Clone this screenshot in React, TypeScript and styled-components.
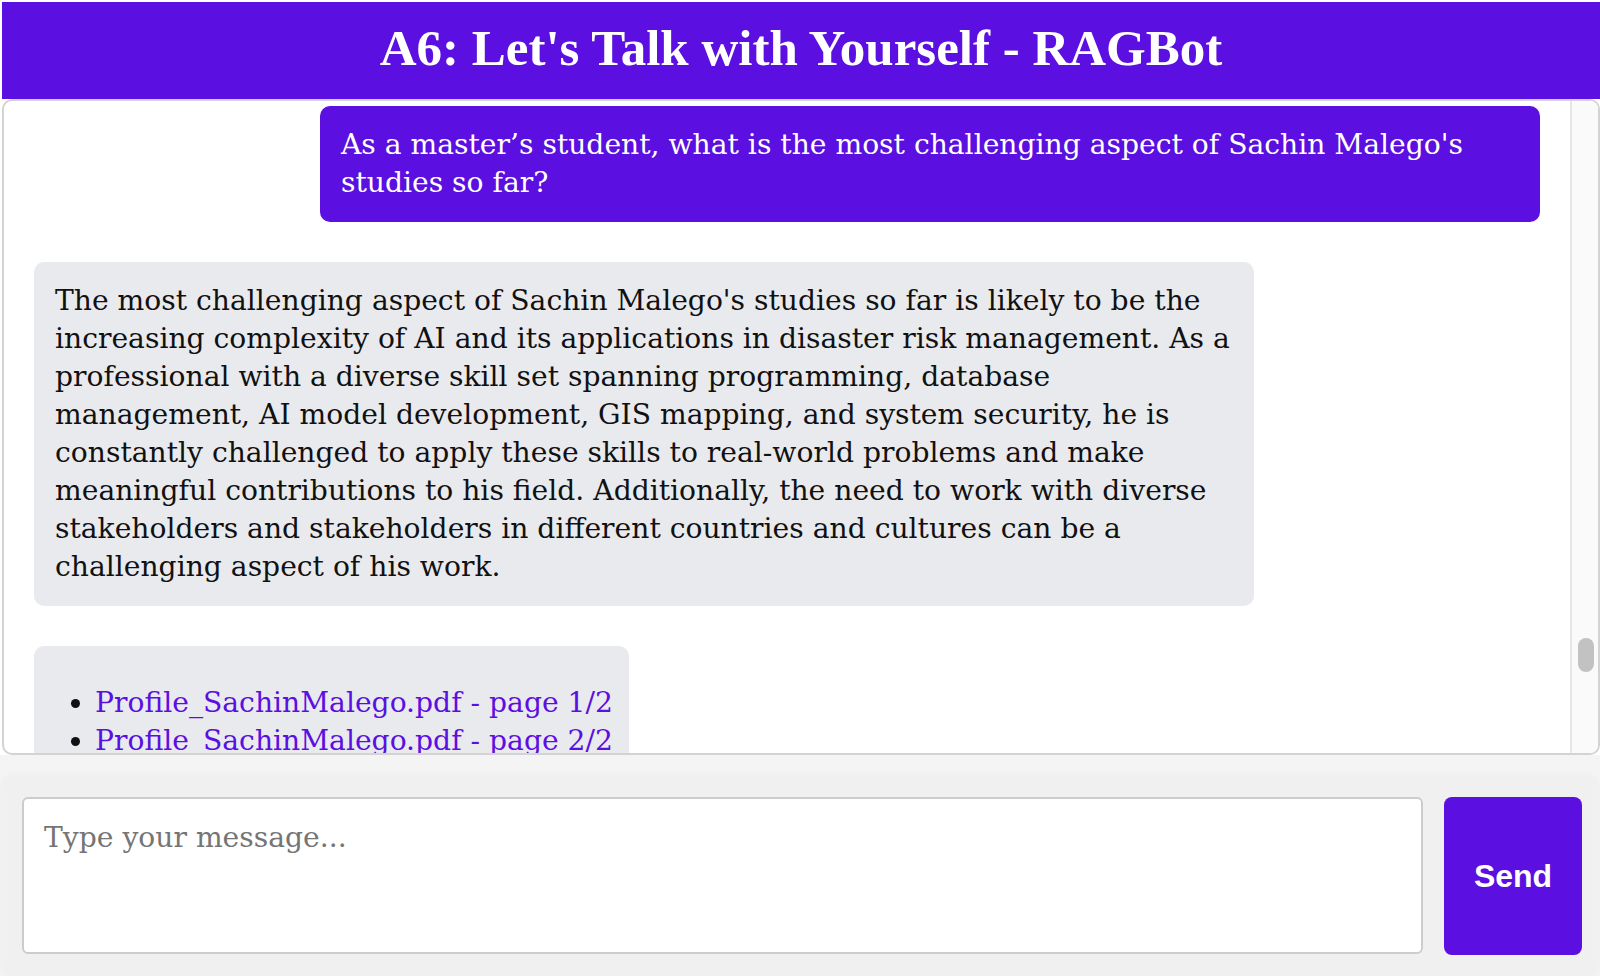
import React, { useLayoutEffect, useRef, useState } from "react";
import styled, { createGlobalStyle } from "styled-components";

const PURPLE = "#5b0fe0";
const BODY_FONT = `"DejaVu Serif", "Liberation Serif", serif`;

const GlobalStyle = createGlobalStyle`
  html, body {
    margin: 0;
    padding: 0;
    height: 100%;
    overflow: hidden;
    background: #ffffff;
  }
  #root { height: 100%; }
  *, *::before, *::after { box-sizing: border-box; }
`;

const Page = styled.div`
  height: 100vh;
  display: flex;
  flex-direction: column;
  padding: 2px 0 0 2px;
  font-family: ${BODY_FONT};
`;

const Header = styled.header`
  flex: 0 0 97px;
  background: ${PURPLE};
  display: flex;
  align-items: center;
  justify-content: center;
  padding-bottom: 5px;
  position: relative;
  z-index: 1;
`;

const Title = styled.h1`
  margin: 0;
  color: #ffffff;
  font-family: "Liberation Serif", serif;
  font-weight: 700;
  font-size: 51px;
  line-height: 1;
`;

const ChatBox = styled.main`
  flex: 1 1 auto;
  min-height: 0;
  display: flex;
  background: #ffffff;
  border: 2px solid #d3d3d3;
  border-radius: 10px;
  overflow: hidden;
`;

const ScrollArea = styled.div`
  flex: 1 1 auto;
  min-width: 0;
  position: relative;
  overflow-y: scroll;
  overflow-x: hidden;
  scrollbar-width: none;

  &::-webkit-scrollbar {
    display: none;
  }
`;

const ScrollTrack = styled.div`
  flex: 0 0 28px;
  position: relative;
  background: #fafafa;
  border-left: 2px solid #e6e6e6;
`;

const ScrollThumb = styled.div`
  position: absolute;
  left: 6px;
  width: 16px;
  border-radius: 8px;
  background: #c2c2c2;
`;

const Thread = styled.div`
  display: flex;
  flex-direction: column;
  gap: 40px;
  padding: 0 30px;
`;

const HistorySpacer = styled.div<{ $height: number }>`
  flex: 0 0 ${(p) => p.$height}px;
`;

const Bubble = styled.div<{ $from: "user" | "bot" }>`
  max-width: 1220px;
  align-self: ${(p) => (p.$from === "user" ? "flex-end" : "flex-start")};
  padding: 20px 16px 20px 21px;
  border-radius: 10px;
  background: ${(p) => (p.$from === "user" ? PURPLE : "#e9eaee")};
  color: ${(p) => (p.$from === "user" ? "#ffffff" : "#111111")};
  font-size: 28.2px;
  line-height: 38px;
`;

const SourceList = styled.ul`
  margin: 18px 0;
  padding-left: 40px;
`;

const SourceLink = styled.a`
  color: ${PURPLE};
  text-decoration: none;
`;

const Composer = styled.section`
  flex: 0 0 220px;
  display: flex;
  background: #f4f4f4;
  margin-left: -2px;
  padding: 21px 2px 0 2px;
`;

const ComposerPanel = styled.div`
  flex: 1;
  display: flex;
  gap: 21px;
  padding: 21px 16px 21px 20px;
  background: #f0f0f0;
  border-radius: 12px;
  box-shadow: 0 0 8px rgba(0, 0, 0, 0.04);
`;

const MessageInput = styled.textarea`
  flex: 1;
  height: 157px;
  margin: 0;
  padding: 20px;
  border: 2px solid #cccccc;
  border-radius: 6px;
  background: #ffffff;
  resize: none;
  outline: none;
  font-family: ${BODY_FONT};
  font-size: 28.2px;
  line-height: 38px;
  color: #111111;

  &::placeholder {
    color: #757575;
  }
`;

const SendButton = styled.button`
  flex: 0 0 138px;
  height: 158px;
  border: none;
  border-radius: 8px;
  background: ${PURPLE};
  color: #ffffff;
  font-family: "Liberation Sans", Arial, sans-serif;
  font-weight: 700;
  font-size: 32px;
  cursor: pointer;
`;

export default function App() {
  const areaRef = useRef<HTMLDivElement>(null);
  const anchorRef = useRef<HTMLDivElement>(null);
  const [thumb, setThumb] = useState({ top: 0, height: 0 });

  const updateThumb = () => {
    const area = areaRef.current;
    if (!area) return;
    const track = area.clientHeight;
    const total = area.scrollHeight;
    const height = Math.max(20, (area.clientHeight / total) * track);
    const maxScroll = total - area.clientHeight;
    const top = maxScroll > 0 ? (area.scrollTop / maxScroll) * (track - height) : 0;
    setThumb({ top, height });
  };

  useLayoutEffect(() => {
    const area = areaRef.current;
    const anchor = anchorRef.current;
    if (area && anchor) {
      area.scrollTop = anchor.offsetTop - 5;
    }
    updateThumb();
  }, []);

  return (
    <>
      <GlobalStyle />
      <Page>
        <Header>
          <Title>A6: Let's Talk with Yourself - RAGBot</Title>
        </Header>
        <ChatBox>
          <ScrollArea ref={areaRef} onScroll={updateThumb}>
            <Thread>
              <HistorySpacer $height={10297} />
              <Bubble $from="user" ref={anchorRef}>
                As a master’s student, what is the most challenging aspect of Sachin Malego's studies so far?
              </Bubble>
              <Bubble $from="bot">
                The most challenging aspect of Sachin Malego's studies so far is likely to be the increasing
                complexity of AI and its applications in disaster risk management. As a professional with a
                diverse skill set spanning programming, database management, AI model development, GIS mapping,
                and system security, he is constantly challenged to apply these skills to real-world problems and
                make meaningful contributions to his field. Additionally, the need to work with diverse
                stakeholders and stakeholders in different countries and cultures can be a challenging aspect of
                his work.
              </Bubble>
              <Bubble $from="bot">
                <SourceList>
                  <li>
                    <SourceLink href="#">Profile_SachinMalego.pdf - page 1/2</SourceLink>
                  </li>
                  <li>
                    <SourceLink href="#">Profile_SachinMalego.pdf - page 2/2</SourceLink>
                  </li>
                </SourceList>
              </Bubble>
              <HistorySpacer $height={1472} />
            </Thread>
          </ScrollArea>
          <ScrollTrack>
            <ScrollThumb style={{ top: thumb.top, height: thumb.height }} />
          </ScrollTrack>
        </ChatBox>
        <Composer>
          <ComposerPanel>
            <MessageInput placeholder="Type your message..." />
            <SendButton type="button">Send</SendButton>
          </ComposerPanel>
        </Composer>
      </Page>
    </>
  );
}
